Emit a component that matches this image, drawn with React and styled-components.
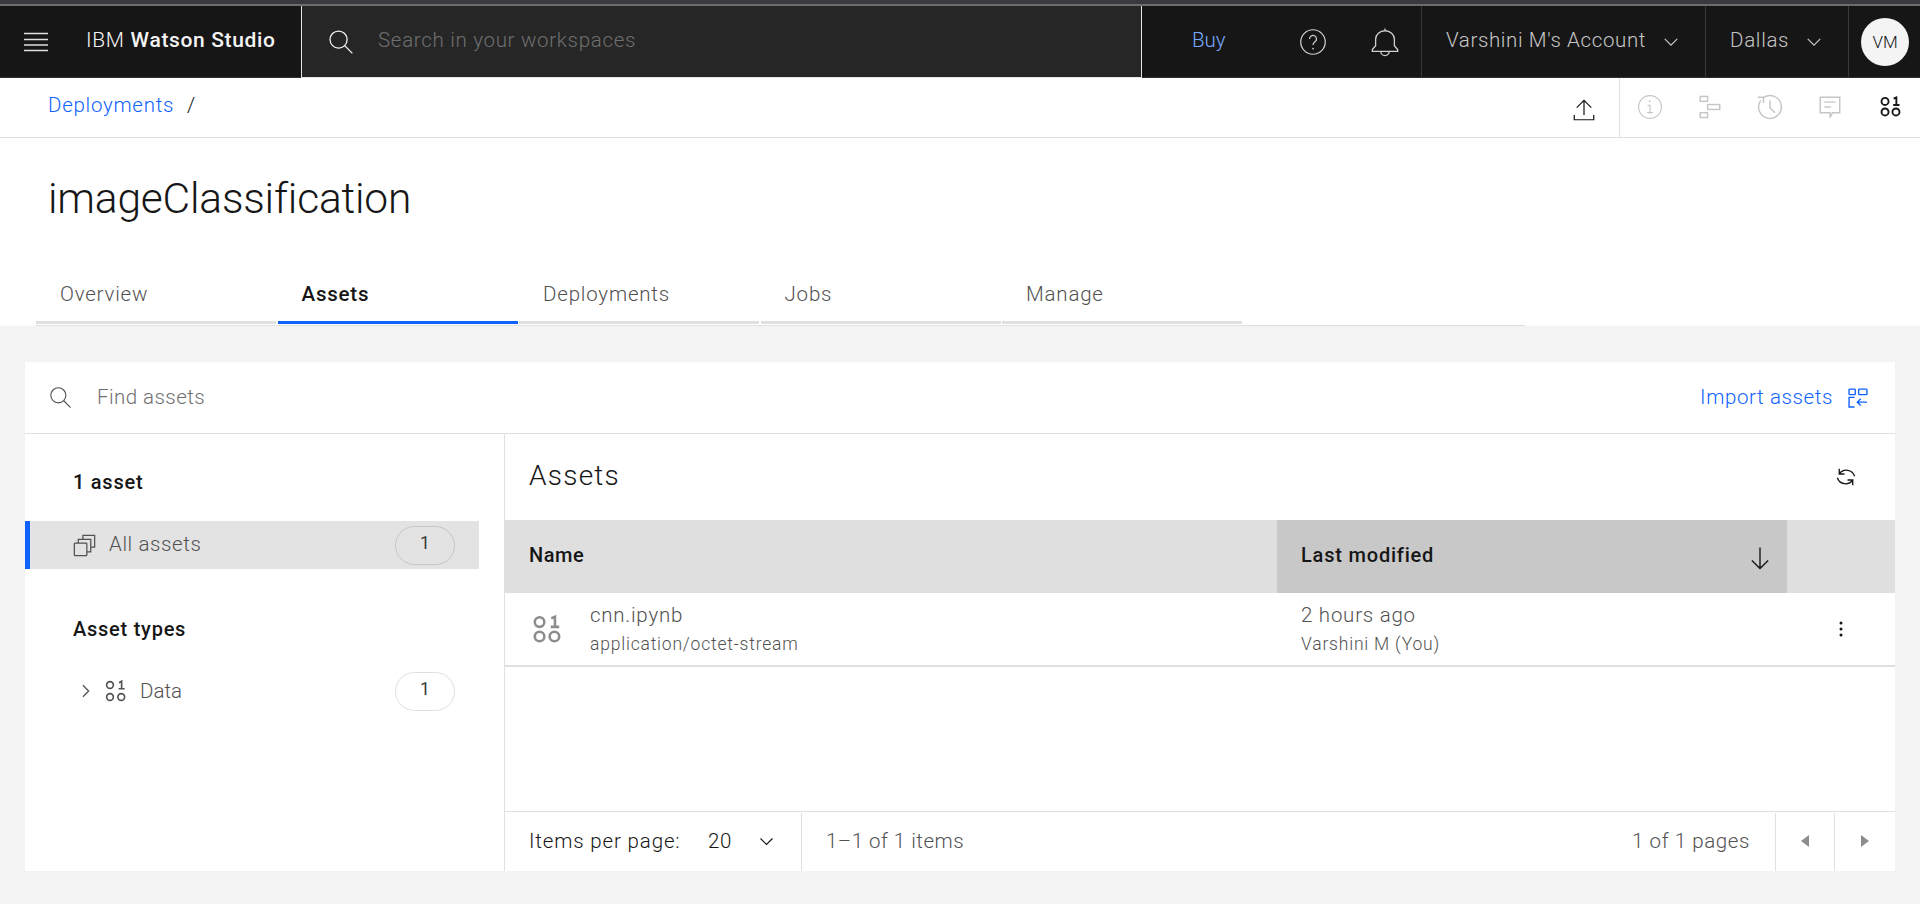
import React from "react";
import styled, { createGlobalStyle } from "styled-components";

const Global = createGlobalStyle`
  html, body { margin: 0; padding: 0; background: #f3f3f3; }
  body { font-family: "Roboto", "Inter", "Liberation Sans", sans-serif; color: #161616; overflow: hidden; }
  * { box-sizing: border-box; }
`;

const Page = styled.div`width: 1920px; height: 904px; display: flex; flex-direction: column; background: #f3f3f3;`;
const Strip = styled.div`height: 6px; flex: none; background: #393a40; border-bottom: 2px solid #6c6c6e;`;
const Header = styled.header`
  height: 72px; flex: none; display: flex; align-items: stretch; background: #161616;
  border-bottom: 1px solid #303030; color: #f4f4f4;
`;
const Burger = styled.div`width: 72px; display: flex; align-items: center; justify-content: center;`;
const Brand = styled.div`
  width: 229px; padding: 0 0 3px 14px; display: flex; align-items: center; gap: 6px; font-size: 21px; letter-spacing: 0.65px;
  b { font-weight: 500; }
  span { font-weight: 300; }
`;
const SearchBox = styled.div`
  width: 841px; display: flex; align-items: center; gap: 24px; padding-left: 26px; background: #262626;
  border: 1px solid #e6e6e6; border-top: 0; border-bottom-width: 1px; margin-bottom: -1px; z-index: 1;
`;
const SearchHint = styled.span`font-size: 20.5px; font-weight: 300; color: #6f6f6f; letter-spacing: 0.7px; padding-bottom: 3px;`;
const Buy = styled.div`
  width: 135px; padding: 0 0 3px 50px; display: flex; align-items: center; font-size: 20.5px; font-weight: 300; color: #78a9ff;
`;
const IconSlot = styled.div`width: ${p => p.$w}px; display: flex; align-items: center; justify-content: center;`;
const HeadMenu = styled.div`
  width: ${p => p.$w}px; border-left: 1px solid #393939; display: flex; align-items: center; justify-content: space-between;
  padding: 0 24px; font-size: 20.5px; font-weight: 300; color: #c6c6c6;
  span { letter-spacing: ${p => p.$ls}px; padding-bottom: 3px; }
`;
const AvatarSlot = styled.div`flex: 1; border-left: 1px solid #393939; display: flex; align-items: center; justify-content: center; padding-left: 1px;`;
const Avatar = styled.div`
  width: 48px; height: 48px; border-radius: 50%; background: #f4f4f4; color: #161616; display: flex; align-items: center;
  justify-content: center; font-size: 17px; font-weight: 300;
`;
const Top = styled.div`background: #fff; flex: none; height: 248px; display: flex; flex-direction: column;`;
const Crumbs = styled.div`height: 60px; flex: none; display: flex; border-bottom: 1px solid #e0e0e0; padding-left: 48px; align-items: stretch;`;
const Crumb = styled.div`
  display: flex; gap: 13px; align-items: flex-start; padding-top: 13px; font-size: 20.5px; font-weight: 300; flex: 1; line-height: 28px;
  a { color: #0f62fe; letter-spacing: .72px; } span { color: #161616; }
`;
const UploadSlot = styled.div`display: flex; align-items: center; width: 70px; padding: 4px 0 0 22px; color: #161616;`;
const ToolGroup = styled.div`display: flex; align-items: center; width: 301px; border-left: 1px solid #e0e0e0;`;
const ToolBtn = styled.div`width: 60px; display: flex; justify-content: center; color: ${p => p.$on ? "#161616" : "#c6c6c6"}; margin-top: -2px;`;
const Title = styled.h1`
  margin: 0; height: 126px; padding: 35px 0 0 48px; font-size: 42.5px; line-height: 52px; font-weight: 300; letter-spacing: -0.2px; color: #161616;
`;
const Tabs = styled.nav`
  margin-left: 36px; width: 1489px; flex: none; display: flex; gap: 1.5px; height: 62px; border-bottom: 1px solid #e0e0e0;
  padding-bottom: 1px;
`;
const Tab = styled.div`
  width: 240px; padding: 17px 0 0 24px; font-size: 20.5px; line-height: 26px; letter-spacing: .8px;
  font-weight: ${p => p.$on ? 500 : 300}; color: ${p => p.$on ? "#161616" : "#525252"};
  border-bottom: 3px solid ${p => p.$on ? "#0f62fe" : "#e0e0e0"};
`;
const Card = styled.section`
  margin: 36px 25px 0; height: 509px; background: #fff; display: flex; flex-direction: column; flex: none;
`;
const FindRow = styled.div`
  height: 72px; flex: none; border-bottom: 1px solid #e0e0e0; display: flex; align-items: center; padding: 0 26px 0 24px; color: #525252;
`;
const FindHint = styled.span`flex: 1; margin-left: 25px; font-size: 20.5px; font-weight: 300; color: #6f6f6f; letter-spacing: .45px; padding-bottom: 2px;`;
const ImportLink = styled.span`
  display: flex; align-items: center; gap: 14px; font-size: 20.5px; font-weight: 300; color: #0f62fe; letter-spacing: .62px;
  b { font-weight: 300; padding-bottom: 2px; }
`;
const Body = styled.div`flex: 1; display: flex; min-height: 0;`;
const Side = styled.aside`width: 480px; flex: none; border-right: 1px solid #e0e0e0; padding-top: 36px;`;
const SideHead = styled.div`
  padding-left: 48px; font-size: 20px; font-weight: 500; line-height: 24px; letter-spacing: .75px; color: #161616; margin-top: ${p => p.$mt || 0}px; margin-bottom: ${p => p.$mb || 0}px;
`;
const SideRow = styled.div`
  width: 454px; height: 48px; display: flex; align-items: center; font-size: 20.5px; font-weight: 300; color: #525252;
  padding-left: ${p => p.$pl}px; padding-right: 24px;
  ${p => p.$active ? "background: #e3e3e3; border-left: 5px solid #0f62fe;" : ""}
`;
const SideLabel = styled.span`flex: 1; margin-left: ${p => p.$ml}px; letter-spacing: ${p => p.$ls || 0}px; padding-bottom: ${p => p.$pb || 0}px;`;
const Count = styled.span`
  width: 60px; height: 39px; border-radius: 20px; border: 1px solid ${p => p.$active ? "#c6c6c6" : "#e0e0e0"}; display: flex; align-items: center;
  justify-content: center; font-size: 17.5px; font-weight: 400; color: #393939; padding-bottom: 5px;
`;
const Main = styled.div`flex: 1; display: flex; flex-direction: column; min-width: 0;`;
const MainHead = styled.div`
  height: 86px; flex: none; display: flex; align-items: center; justify-content: space-between; padding: 0 37px 0 24px;
`;
const MainTitle = styled.h2`margin: 0 0 4px; font-size: 28px; font-weight: 300; color: #161616; letter-spacing: 1.25px;`;
const Grid = styled.div`display: grid; grid-template-columns: 772px 510px 1fr; flex: none;`;
const Th = styled.div`
  height: 73px; padding: 0 24px; display: flex; align-items: center; justify-content: space-between; font-size: 20px; font-weight: 500;
  letter-spacing: ${p => p.$sorted ? .8 : .5}px;
  background: ${p => p.$sorted ? "#c8c8c8" : "#dfdfdf"}; color: #161616; padding-bottom: 4px;
`;
const Td = styled.div`
  height: 74px; border-bottom: 2px solid #e0e0e0; display: flex; align-items: center; padding: 0 24px;
`;
const NameCell = styled(Td)`gap: 26px; padding-left: 25px;`;
const Stack = styled.div`display: flex; flex-direction: column; gap: 7px; margin-top: -1px;`;
const Primary = styled.span`font-size: 20.5px; font-weight: 300; color: #525252; line-height: 24px; letter-spacing: .75px;`;
const Secondary = styled.span`font-size: 17.5px; font-weight: 300; color: #525252; line-height: 20px; letter-spacing: .8px;`;
const ActionCell = styled(Td)`padding: 0 0 0 51px;`;
const Spacer = styled.div`flex: 1;`;
const Pager = styled.div`
  height: 60px; flex: none; border-top: 1px solid #e0e0e0; display: flex; align-items: stretch; font-size: 20.5px; font-weight: 300;
`;
const PagerCell = styled.div`
  display: flex; align-items: center; margin-top: 1px; padding-bottom: 2px;
  ${p => p.$line ? "border-left: 1px solid #e0e0e0;" : ""}
  ${p => p.$w ? `width: ${p.$w}px; flex: none;` : "flex: 1;"}
  ${p => p.$pad ? `padding-left: ${p.$pad}px;` : ""}
  ${p => p.$center ? "justify-content: center; padding-left: 0;" : ""}
`;
const PerPage = styled.span`color: #161616; letter-spacing: .85px; width: 179px;`;
const PerValue = styled.span`color: #161616; width: 49px; letter-spacing: .6px;`;
const Muted = styled.span`color: #525252; letter-spacing: ${p => p.$right ? .6 : .5}px; ${p => p.$right ? "margin-left: auto; margin-right: 25px;" : ""}`;
const RowGlyph = styled.span`color: #8d8d8d; display: flex;`;
const HeadIconColor = styled.span`color: #d0d0d0; display: flex;`;

const Icon = ({ size = 24, sw = 1.5, children, vb = "0 0 32 32", ...rest }) => (
  <svg width={size} height={size} viewBox={vb} fill="none" stroke="currentColor" strokeWidth={sw} {...rest}>{children}</svg>
);
const Search = ({ size, sw }) => <Icon size={size} sw={sw}><circle cx="13" cy="13" r="10.5" /><path d="M20.5 20.5 30 30" /></Icon>;
const Chevron = ({ size = 20, color = "currentColor" }) => <Icon size={size} sw={2} color={color}><path d="M6 11l10 10 10-10" /></Icon>;
const DataIcon = ({ size = 32 }) => (
  <Icon size={size} sw={2.4}>
    <circle cx="9" cy="9.5" r="4.5" /><circle cx="9" cy="23" r="4.5" /><circle cx="23" cy="23" r="4.5" />
    <path d="M20 6l3.5-1.5V14M19.5 14h8" />
  </Icon>
);

export default function App() {
  return (
    <Page>
      <Global />
      <Strip />
      <Header>
        <Burger>
          <svg width="24" height="20" viewBox="0 0 24 20" stroke="#e0e0e0" strokeWidth="1.6"><path d="M0 1.5h24M0 7.5h24M0 13h24M0 18.5h24" /></svg>
        </Burger>
        <Brand><span>IBM</span><b>Watson Studio</b></Brand>
        <SearchBox><Search size={26} sw={1.6} /><SearchHint>Search in your workspaces</SearchHint></SearchBox>
        <Buy>Buy</Buy>
        <IconSlot $w={72}>
          <HeadIconColor>
            <Icon size={28} sw={1.4}>
              <circle cx="16" cy="16" r="14" />
              <path d="M12 12.5a4 4 0 1 1 6.2 3.3c-1.5 1-2.2 1.7-2.2 3.7" />
              <circle cx="16" cy="23.5" r="1" fill="currentColor" stroke="none" />
            </Icon>
          </HeadIconColor>
        </IconSlot>
        <IconSlot $w={72}>
          <HeadIconColor>
            <Icon size={30} sw={1.4}>
              <path d="M16 1.5v3M6 13a10 9 0 0 1 20 0v7l3.5 4v2h-27v-2L6 20zM11.5 26a4.5 4.5 0 0 0 9 0" />
            </Icon>
          </HeadIconColor>
        </IconSlot>
        <HeadMenu $w={284} $ls={.62}><span>Varshini M's Account</span><Chevron size={20} color="#c6c6c6" /></HeadMenu>
        <HeadMenu $w={143} $ls={.7}><span>Dallas</span><Chevron size={20} color="#c6c6c6" /></HeadMenu>
        <AvatarSlot><Avatar>VM</Avatar></AvatarSlot>
      </Header>
      <Top>
        <Crumbs>
          <Crumb><a>Deployments</a><span>/</span></Crumb>
          <UploadSlot>
            <Icon size={26} sw={1.5}><path d="M16 22V4M7 13l9-9 9 9M4 22v6h24v-6" /></Icon>
          </UploadSlot>
          <ToolGroup>
            <ToolBtn><Icon size={26} sw={1.4}><circle cx="16" cy="16" r="14" /><path d="M12.5 23h7M16 23v-9h-3" /><circle cx="15.5" cy="9" r="1.2" fill="currentColor" stroke="none" /></Icon></ToolBtn>
            <ToolBtn><Icon size={26} sw={1.8}><rect x="4" y="3" width="9" height="6" /><rect x="13" y="13" width="15" height="6" /><rect x="4" y="23" width="9" height="6" /></Icon></ToolBtn>
            <ToolBtn><Icon size={26} sw={1.8}><path d="M8 4.5A14 14 0 1 1 4.5 8M8 11V4H1M16 8v9l6 6" /></Icon></ToolBtn>
            <ToolBtn><Icon size={26} sw={1.8}><path d="M4 4h24v19H19l-3 6v-6H4zM9 10h14M9 16h8" /></Icon></ToolBtn>
            <ToolBtn $on><DataIcon size={25} /></ToolBtn>
          </ToolGroup>
        </Crumbs>
        <Title>imageClassification</Title>
        <Tabs>
          <Tab>Overview</Tab>
          <Tab $on>Assets</Tab>
          <Tab>Deployments</Tab>
          <Tab>Jobs</Tab>
          <Tab>Manage</Tab>
        </Tabs>
      </Top>
      <Card>
        <FindRow>
          <Search size={23} sw={1.6} />
          <FindHint>Find assets</FindHint>
          <ImportLink>
            <b>Import assets</b>
            <Icon size={22} sw={2}>
              <rect x="3" y="3" width="9" height="8" rx="1" /><rect x="17" y="3" width="12" height="8" rx="1" />
              <path d="M11 15H3v14h8M29 22H15M20 17l-5 5 5 5" />
            </Icon>
          </ImportLink>
        </FindRow>
        <Body>
          <Side>
            <SideHead $mb={27}>1 asset</SideHead>
            <SideRow $active $pl={42}>
              <Icon size={25} sw={1.6}>
                <rect x="3" y="13" width="16" height="16" rx="1" /><path d="M8 13V8h16v16h-5M14 8V3h15v15h-5" />
              </Icon>
              <SideLabel $ml={12} $ls={.6} $pb={2}>All assets</SideLabel>
              <Count $active>1</Count>
            </SideRow>
            <SideHead $mt={48} $mb={26}>Asset types</SideHead>
            <SideRow $pl={54}>
              <Icon size={14} sw={3}><path d="M9 3l13 13L9 29" /></Icon>
              <Icon size={24} sw={2.2} style={{ marginLeft: 11 }}>
                <circle cx="8" cy="8" r="4.5" /><circle cx="8" cy="24" r="4.5" /><circle cx="23" cy="24" r="4.5" /><path d="M20 5l3.5-2v10M19.5 13h8" />
              </Icon>
              <SideLabel $ml={12}>Data</SideLabel>
              <Count>1</Count>
            </SideRow>
          </Side>
          <Main>
            <MainHead>
              <MainTitle>Assets</MainTitle>
              <Icon size={24} sw={1.8}><path d="M7 5v7h7M7 12A11.5 11.5 0 0 1 27.5 15M25 27v-7h-7M25 20A11.5 11.5 0 0 1 4.5 17" /></Icon>
            </MainHead>
            <Grid>
              <Th>Name</Th>
              <Th $sorted>Last modified
                <Icon size={26} sw={1.7} style={{ marginTop: 6, marginRight: -10 }}><path d="M16 3v26M6 19l10 10 10-10" /></Icon>
              </Th>
              <Th />
              <NameCell>
                <RowGlyph><DataIcon size={34} /></RowGlyph>
                <Stack><Primary>cnn.ipynb</Primary><Secondary>application/octet-stream</Secondary></Stack>
              </NameCell>
              <Td>
                <Stack><Primary>2 hours ago</Primary><Secondary>Varshini M (You)</Secondary></Stack>
              </Td>
              <ActionCell>
                <svg width="6" height="16" viewBox="0 0 6 16" fill="#161616"><circle cx="3" cy="2" r="1.5" /><circle cx="3" cy="8" r="1.5" /><circle cx="3" cy="14" r="1.5" /></svg>
              </ActionCell>
            </Grid>
            <Spacer />
            <Pager>
              <PagerCell $w={296} $pad={24}>
                <PerPage>Items per page:</PerPage><PerValue>20</PerValue><Chevron size={19} />
              </PagerCell>
              <PagerCell $line $pad={24}><Muted>1–1 of 1 items</Muted><Muted $right>1 of 1 pages</Muted></PagerCell>
              <PagerCell $w={59} $line $center><svg width="8" height="12" viewBox="0 0 8 12" fill="#8d8d8d"><path d="M8 0v12L0 6z" /></svg></PagerCell>
              <PagerCell $w={61} $line $center><svg width="8" height="12" viewBox="0 0 8 12" fill="#8d8d8d"><path d="M0 0v12l8-6z" /></svg></PagerCell>
            </Pager>
          </Main>
        </Body>
      </Card>
    </Page>
  );
}
